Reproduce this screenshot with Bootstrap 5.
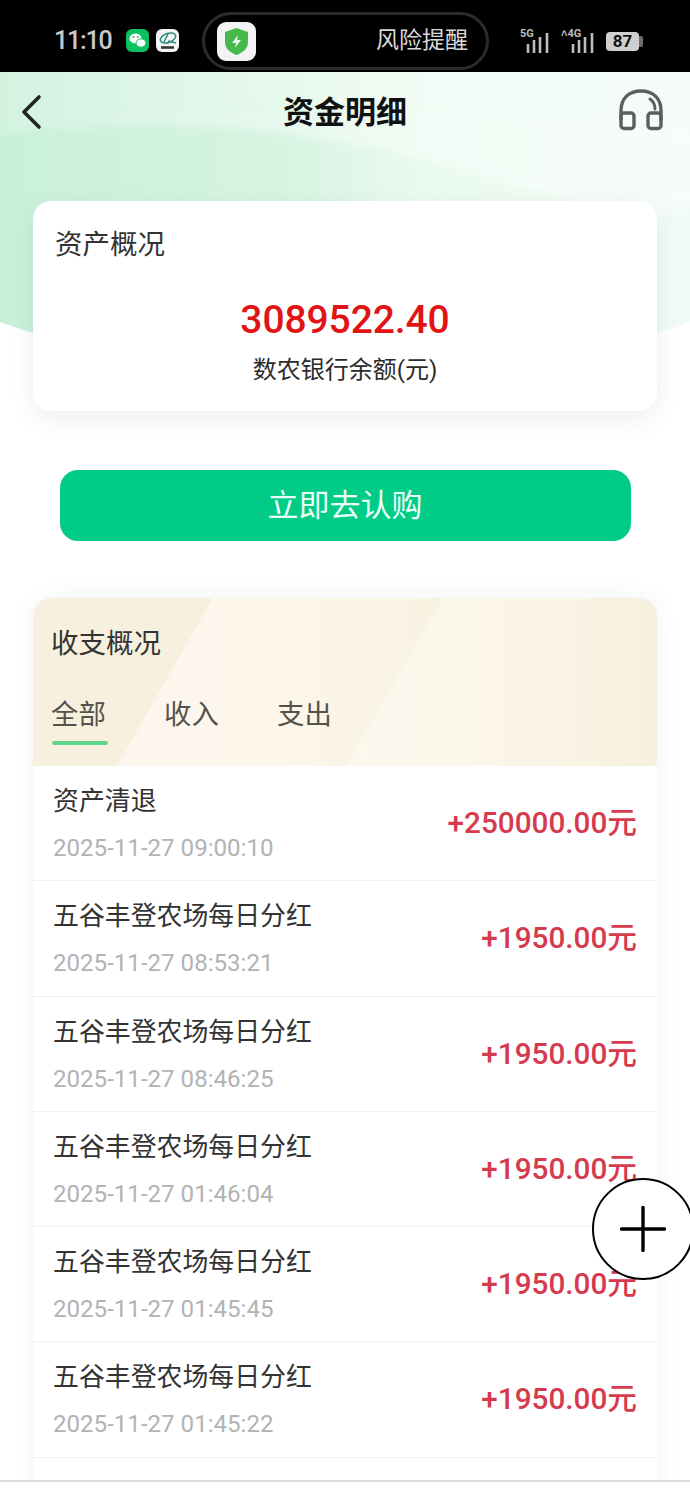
<!doctype html>
<html lang="zh-CN">

<head>
  <meta charset="utf-8" />
  <meta name="viewport" content="width=device-width, initial-scale=1" />
  <title>资金明细</title>
  <link href="https://cdn.jsdelivr.net/npm/bootstrap@5.3.5/dist/css/bootstrap.min.css" rel="stylesheet" />
  <style>
    html, body { height: 100%; }

    body {
      background-color: #fff;
      font-family: Roboto, "Noto Sans CJK SC", sans-serif;
      overflow: hidden;
    }

    .screen { position: relative; width: 690px; height: 1489px; overflow: hidden; }

    /* status bar */
    .status-bar { height: 72px; background-color: #000; padding: 12px 0 0 54px; flex: none; }
    .status-time { width: 72px; height: 58px; line-height: 58px; font-size: 25px; font-weight: 500; color: #c9c9c9; letter-spacing: -1.2px; }
    .status-app { width: 23px; height: 23px; margin: 17px 7px 0 0; flex: none; }
    .island { width: 287px; height: 58px; margin-left: 16px; border: 3px solid #2b2b2b; border-radius: 29px; padding: 0 18px 0 12px; flex: none; }
    .island-text { font-size: 23px; color: #d9d9d9; }
    .status-right { height: 58px; margin-left: 31px; gap: 7px; }
    .net-tag { position: absolute; top: -2px; left: 0; font-size: 11px; font-weight: 700; line-height: 11px; color: #bdbdbd; }
    .net-icon { position: relative; height: 22px; }
    .net-5g { width: 32px; }
    .net-4g { width: 37px; }
    .net-4g .net-tag { left: 2px; }
    .battery { width: 33px; height: 19px; margin-left: 3px; border-radius: 4px; background-color: #cfcfcf; color: #111; font-size: 17px; font-weight: 700; line-height: 19px; text-align: center; position: relative; }
    .battery::after { content: ""; position: absolute; right: -4px; top: 4px; width: 4px; height: 11px; background-color: #6d6d6d; border-radius: 0 2px 2px 0; }

    /* page */
    .page-body { position: relative; flex: 1 1 auto; min-height: 0; overflow: hidden; padding: 0 33px; }
    .page-bg { position: absolute; top: 0; left: 0; width: 690px; height: 300px; }
    .top-bar { position: relative; height: 80px; margin: 0 -33px; padding: 0 26px 0 20px; }
    .top-side-left { width: 52px; }
    .top-side-right { width: 46px; margin-top: -4px; }
    .top-title { font-size: 31px; font-weight: 700; color: #111; margin: 0; line-height: 1; }

    .asset-card { position: relative; height: 210px; margin-top: 49px; border: 0; border-radius: 18px; box-shadow: 0 8px 26px rgba(0, 0, 0, .07); padding: 27px 22px 0; }
    .asset-title { font-size: 27.5px; line-height: 34px; color: #333; }
    .asset-num { margin-top: 35px; font-size: 39px; line-height: 46px; font-weight: 500; color: #e01414; text-align: center; letter-spacing: -.1px; }
    .asset-label { margin-top: 10px; font-size: 24px; line-height: 34px; color: #2b2b2b; text-align: center; }

    .buy-btn { position: relative; display: block; width: 571px; height: 71px; margin: 59px 0 0 26.5px; border: 0; border-radius: 18px; background-color: #00cc88; color: #eafff5; font-size: 31px; line-height: 71px; padding: 0; }
    .buy-btn:hover { background-color: #00cc88; color: #eafff5; }

    .flow-card { position: relative; margin-top: 57px; border: 0; border-radius: 18px 18px 0 0; box-shadow: 0 0 24px rgba(0, 0, 0, .06); }
    .flow-head { position: relative; height: 168px; border-radius: 18px 18px 0 0; background-color: #f7f0de; overflow: hidden; padding: 29px 18px 0; }
    .flow-stripes { position: absolute; top: 0; left: 0; width: 625px; height: 168px; }
    .flow-title { position: relative; font-size: 27.5px; line-height: 34px; color: #333; }
    .flow-tabs { position: relative; margin-top: 37px; gap: 59px; border: 0; }
    .flow-tab { display: block; position: relative; width: 54px; font-size: 27.4px; line-height: 34px; color: #55524c; padding: 0; text-decoration: none; white-space: nowrap; }
    .flow-tab:hover { color: #55524c; }
    .flow-tab.active::after { content: ""; position: absolute; left: 1px; top: 43px; width: 56px; height: 4px; border-radius: 2px; background-color: #5fd68a; }

    .flow-row { height: 115.3px; padding: 18px 20px 0 20px; border-color: #f0f0f0; }
    .row-name { font-size: 25.9px; line-height: 34px; color: #333; white-space: nowrap; }
    .row-time { margin-top: 15px; font-size: 24.1px; line-height: 30px; color: #b3b3b3; white-space: nowrap; }
    .row-amount { margin-top: 21px; font-size: 29.7px; line-height: 36px; font-weight: 500; color: #d63a4e; white-space: nowrap; }

    .fab { position: absolute; left: 592px; top: 1178px; width: 102px; height: 102px; padding: 0; border: 2.5px solid #000; border-radius: 50%; background-color: #fff; }
    .home-edge { height: 9px; flex: none; background-color: #fff; border-top: 2px solid #dcdcdc; }
  </style>
</head>

<body>
  <div class="screen d-flex flex-column">
    <div class="status-bar d-flex align-items-start">
      <div class="status-time">11:10</div>
      <svg class="status-app" viewBox="0 0 23 23">
        <rect width="23" height="23" rx="6" fill="#0cc160" />
        <ellipse cx="9.5" cy="9.5" rx="6" ry="5" fill="#fff" />
        <ellipse cx="15" cy="14" rx="5" ry="4.2" fill="#fff" stroke="#0cc160" />
        <circle cx="7.5" cy="8" r=".9" fill="#0cc160" />
        <circle cx="11.5" cy="8" r=".9" fill="#0cc160" />
      </svg>
      <svg class="status-app" viewBox="0 0 23 23">
        <rect width="23" height="23" rx="6" fill="#f4f4f4" />
        <ellipse cx="12" cy="9" rx="8" ry="4.5" fill="none" stroke="#2d8a76" stroke-width="1.5" transform="rotate(-20 12 9)" />
        <path d="M8 13 12 5M12 12 20 14" fill="none" stroke="#2d8a76" stroke-width="1.5" />
        <path d="M5 18.5H18" stroke="#333" stroke-width="2.6" />
      </svg>
      <div class="island d-flex align-items-center justify-content-between">
        <svg width="39" height="39" viewBox="0 0 39 39">
          <rect width="39" height="39" rx="9" fill="#f3f3f3" />
          <path d="M19.5 6 31 10V20C31 27 25 31 19.5 33 14 31 8 27 8 20V10Z" fill="#46b94c" />
          <path d="M21 13 15 21H19L18 26 24 18H20Z" fill="#e9f8ea" />
        </svg>
        <span class="island-text">风险提醒</span>
      </div>
      <div class="status-right d-flex align-items-center">
        <div class="net-icon net-5g">
          <span class="net-tag">5G</span>
          <svg width="32" height="22" viewBox="0 0 32 22"><path d="M8 12V21M14 8V21M20 5V21M27 1V21" stroke="#bdbdbd" stroke-width="2.6" /></svg>
        </div>
        <div class="net-icon net-4g">
          <span class="net-tag">˄4G</span>
          <svg width="37" height="22" viewBox="0 0 37 22"><path d="M14 12V21M20 8V21M26 5V21M33 1V21" stroke="#bdbdbd" stroke-width="2.6" /></svg>
        </div>
        <div class="battery">87</div>
      </div>
    </div>

    <div class="page-body">
      <svg class="page-bg" viewBox="0 0 690 300" preserveAspectRatio="none">
        <defs>
          <linearGradient id="wash" x1="0" x2="1" y1="0" y2="0">
            <stop offset="0" stop-color="#c8f0d9" />
            <stop offset=".4" stop-color="#d6f4e1" />
            <stop offset=".62" stop-color="#eafaf0" />
            <stop offset="1" stop-color="#f1fbf5" />
          </linearGradient>
          <linearGradient id="veil" x1="0" x2="1" y1="0" y2="0">
            <stop offset="0" stop-color="#fff" stop-opacity=".18" />
            <stop offset=".5" stop-color="#fff" stop-opacity=".42" />
            <stop offset="1" stop-color="#fff" stop-opacity=".25" />
          </linearGradient>
          <filter id="soft" x="-5%" y="-20%" width="110%" height="140%">
            <feGaussianBlur stdDeviation="5" />
          </filter>
        </defs>
        <path d="M0 0H690V250C600 285 480 290 345 290 210 290 90 285 0 250Z" fill="url(#wash)" />
        <path d="M-20 -20H710V60C560 30 200 30 -20 66Z" fill="url(#veil)" filter="url(#soft)" />
        <path d="M-20 66C200 30 420 70 620 150L710 130V60C560 30 200 30 -20 66Z" fill="#fff" opacity=".42" filter="url(#soft)" />
      </svg>

      <div class="top-bar d-flex align-items-center justify-content-between">
        <div class="top-side-left d-flex">
          <svg width="22" height="36" viewBox="0 0 22 36">
            <path d="M19 3 4 18 19 33" fill="none" stroke="#222" stroke-width="3.6" stroke-linecap="round" stroke-linejoin="round" />
          </svg>
        </div>
        <h1 class="top-title">资金明细</h1>
        <div class="top-side-right d-flex">
          <svg width="46" height="42" viewBox="0 0 46 42">
            <path d="M3 31V22C3 9 11 2 23 2S43 9 43 22V31" fill="none" stroke="#5a5f5c" stroke-width="3.4" />
            <rect x="3" y="24" width="13" height="15.5" rx="3" fill="none" stroke="#5a5f5c" stroke-width="3.4" />
            <rect x="30" y="24" width="13" height="15.5" rx="3" fill="none" stroke="#5a5f5c" stroke-width="3.4" />
            <path d="M32 10C35 12 37 16 37 20" fill="none" stroke="#5a5f5c" stroke-width="3" stroke-linecap="round" />
          </svg>
        </div>
      </div>

      <div class="card asset-card">
        <div class="asset-title">资产概况</div>
        <div class="asset-num">3089522.40</div>
        <div class="asset-label">数农银行余额(元)</div>
      </div>

      <a href="#" class="btn buy-btn">立即去认购</a>

      <div class="card flow-card">
        <div class="flow-head">
          <svg class="flow-stripes" viewBox="0 0 625 168">
            <defs>
              <linearGradient id="stripeA" x1="0" x2="1" y1="0" y2="0">
                <stop offset="0" stop-color="#fdf6ee" />
                <stop offset=".55" stop-color="#fcf6ea" />
                <stop offset="1" stop-color="#f8f2e1" />
              </linearGradient>
              <linearGradient id="stripeB" x1="0" x2="1" y1="0" y2="0">
                <stop offset="0" stop-color="#fcf8ee" />
                <stop offset=".45" stop-color="#fbf6e9" />
                <stop offset="1" stop-color="#f7f0de" />
              </linearGradient>
            </defs>
            <path d="M180 0H410L313 168H84Z" fill="url(#stripeA)" />
            <path d="M410 0H625V168H313Z" fill="url(#stripeB)" />
          </svg>
          <div class="flow-title">收支概况</div>
          <div class="nav flow-tabs">
            <a class="nav-link flow-tab active" href="#">全部</a>
            <a class="nav-link flow-tab" href="#">收入</a>
            <a class="nav-link flow-tab" href="#">支出</a>
          </div>
        </div>

        <div class="list-group list-group-flush">
          <div class="list-group-item flow-row d-flex justify-content-between">
            <div>
              <div class="row-name">资产清退</div>
              <div class="row-time">2025-11-27 09:00:10</div>
            </div>
            <div class="row-amount">+250000.00元</div>
          </div>
          <div class="list-group-item flow-row d-flex justify-content-between">
            <div>
              <div class="row-name">五谷丰登农场每日分红</div>
              <div class="row-time">2025-11-27 08:53:21</div>
            </div>
            <div class="row-amount">+1950.00元</div>
          </div>
          <div class="list-group-item flow-row d-flex justify-content-between">
            <div>
              <div class="row-name">五谷丰登农场每日分红</div>
              <div class="row-time">2025-11-27 08:46:25</div>
            </div>
            <div class="row-amount">+1950.00元</div>
          </div>
          <div class="list-group-item flow-row d-flex justify-content-between">
            <div>
              <div class="row-name">五谷丰登农场每日分红</div>
              <div class="row-time">2025-11-27 01:46:04</div>
            </div>
            <div class="row-amount">+1950.00元</div>
          </div>
          <div class="list-group-item flow-row d-flex justify-content-between">
            <div>
              <div class="row-name">五谷丰登农场每日分红</div>
              <div class="row-time">2025-11-27 01:45:45</div>
            </div>
            <div class="row-amount">+1950.00元</div>
          </div>
          <div class="list-group-item flow-row d-flex justify-content-between">
            <div>
              <div class="row-name">五谷丰登农场每日分红</div>
              <div class="row-time">2025-11-27 01:45:22</div>
            </div>
            <div class="row-amount">+1950.00元</div>
          </div>
          <div class="list-group-item flow-row"></div>
        </div>
      </div>
    </div>

    <div class="home-edge"></div>

    <button class="btn fab d-flex align-items-center justify-content-center" type="button" aria-label="add">
      <svg width="46" height="46" viewBox="0 0 46 46">
        <path d="M23 1.5V44.5M1.5 23H44.5" stroke="#000" stroke-width="3.4" stroke-linecap="round" />
      </svg>
    </button>
  </div>

  <script src="https://cdn.jsdelivr.net/npm/bootstrap@5.3.5/dist/js/bootstrap.bundle.min.js"></script>
</body>

</html>
